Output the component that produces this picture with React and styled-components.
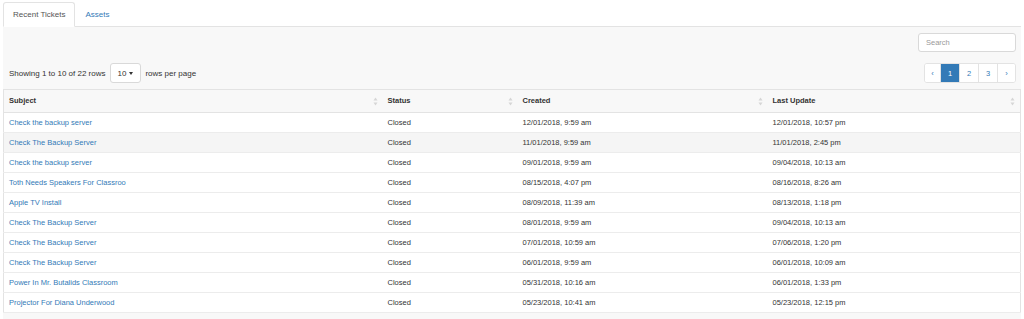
import styled, { createGlobalStyle } from 'styled-components';

const tickets = [
  { subject: 'Check the backup server', status: 'Closed', created: '12/01/2018, 9:59 am', updated: '12/01/2018, 10:57 pm' },
  { subject: 'Check The Backup Server', status: 'Closed', created: '11/01/2018, 9:59 am', updated: '11/01/2018, 2:45 pm', hover: true },
  { subject: 'Check the backup server', status: 'Closed', created: '09/01/2018, 9:59 am', updated: '09/04/2018, 10:13 am' },
  { subject: 'Toth Needs Speakers For Classroo', status: 'Closed', created: '08/15/2018, 4:07 pm', updated: '08/16/2018, 8:26 am' },
  { subject: 'Apple TV Install', status: 'Closed', created: '08/09/2018, 11:39 am', updated: '08/13/2018, 1:18 pm' },
  { subject: 'Check The Backup Server', status: 'Closed', created: '08/01/2018, 9:59 am', updated: '09/04/2018, 10:13 am' },
  { subject: 'Check The Backup Server', status: 'Closed', created: '07/01/2018, 10:59 am', updated: '07/06/2018, 1:20 pm' },
  { subject: 'Check The Backup Server', status: 'Closed', created: '06/01/2018, 9:59 am', updated: '06/01/2018, 10:09 am' },
  { subject: 'Power In Mr. Butalids Classroom', status: 'Closed', created: '05/31/2018, 10:16 am', updated: '06/01/2018, 1:33 pm' },
  { subject: 'Projector For Diana Underwood', status: 'Closed', created: '05/23/2018, 10:41 am', updated: '05/23/2018, 12:15 pm' },
];

const columns = [
  { label: 'Subject', width: 379 },
  { label: 'Status', width: 135 },
  { label: 'Created', width: 250 },
  { label: 'Last Update' },
];

function SortIcon() {
  return (
    <svg width="5" height="9" viewBox="0 0 5 9">
      <path d="M2.5 0.5 L4.5 3.5 L0.5 3.5 Z" fill="#d6d6d6" />
      <path d="M2.5 8.5 L4.5 5.5 L0.5 5.5 Z" fill="#d6d6d6" />
    </svg>
  );
}

export default function App() {
  return (
    <>
      <GlobalStyle />
      <Page>
        <Tabs>
          <Tab $active>Recent Tickets</Tab>
          <Tab>Assets</Tab>
        </Tabs>
        <Panel>
          <SearchRow>
            <SearchInput placeholder="Search" />
          </SearchRow>
          <Toolbar>
            <PageInfo>
              <span>Showing 1 to 10 of 22 rows</span>
              <SizeButton>
                10 <Caret />
              </SizeButton>
              <span>rows per page</span>
            </PageInfo>
            <Pagination>
              <PageItem>‹</PageItem>
              <PageItem $active>1</PageItem>
              <PageItem>2</PageItem>
              <PageItem>3</PageItem>
              <PageItem>›</PageItem>
            </Pagination>
          </Toolbar>
          <Table>
            <thead>
              <tr>
                {columns.map((col) => (
                  <HeadCell key={col.label} style={col.width ? { width: col.width } : undefined}>
                    <span>{col.label}</span>
                    <SortIcon />
                  </HeadCell>
                ))}
              </tr>
            </thead>
            <tbody>
              {tickets.map((t, i) => (
                <Row key={i} $hover={t.hover}>
                  <Cell>
                    <SubjectLink href="#">{t.subject}</SubjectLink>
                  </Cell>
                  <Cell>{t.status}</Cell>
                  <Cell>{t.created}</Cell>
                  <Cell>{t.updated}</Cell>
                </Row>
              ))}
            </tbody>
          </Table>
        </Panel>
      </Page>
    </>
  );
}

const GlobalStyle = createGlobalStyle`
  body {
    margin: 0;
    background: #fff;
    font-family: "Liberation Sans", Arial, Helvetica, sans-serif;
    font-size: 7.5px;
    color: #333;
  }
`;

const Page = styled.div`
  width: 1018px;
  margin-left: 3px;
  padding-top: 2px;
`;

const Tabs = styled.div`
  display: flex;
  height: 24px;
  border-bottom: 1px solid #e3e3e3;
`;

const Tab = styled.div`
  display: flex;
  align-items: center;
  padding: 0 9px 1px;
  margin-bottom: -1px;
  height: 25px;
  box-sizing: border-box;
  white-space: nowrap;
  background: ${(p) => (p.$active ? '#fff' : 'transparent')};
  border: 1px solid ${(p) => (p.$active ? '#e3e3e3' : 'transparent')};
  border-bottom-color: ${(p) => (p.$active ? '#fff' : 'transparent')};
  border-radius: 3px 3px 0 0;
  color: ${(p) => (p.$active ? '#555' : '#337ab7')};
  font-size: 8px;
`;

const Panel = styled.div`
  background: #f8f8f8;
  padding: 6px 0 6px 0;
  height: 293px;
  box-sizing: border-box;
`;

const SearchRow = styled.div`
  display: flex;
  justify-content: flex-end;
  padding-right: 5px;
`;

const SearchInput = styled.input`
  width: 98px;
  height: 19px;
  box-sizing: border-box;
  border: 1px solid #d9d9d9;
  border-radius: 3px;
  background: #fff;
  padding: 0 7px;
  font-family: inherit;
  font-size: 7.5px;
  outline: none;
  &::placeholder {
    color: #9a9a9a;
  }
`;

const Toolbar = styled.div`
  display: flex;
  justify-content: space-between;
  align-items: center;
  margin-top: 11px;
  padding: 0 5px 0 6px;
  height: 20px;
`;

const PageInfo = styled.div`
  display: flex;
  align-items: center;
  gap: 4px;
  color: #333;
  font-size: 8px;
`;

const SizeButton = styled.div`
  display: flex;
  align-items: center;
  gap: 3px;
  height: 20px;
  box-sizing: border-box;
  padding: 0 7px;
  background: #fff;
  border: 1px solid #d9d9d9;
  border-radius: 3px;
  color: #333;
`;

const Caret = styled.span`
  display: inline-block;
  border-left: 2.5px solid transparent;
  border-right: 2.5px solid transparent;
  border-top: 3px solid #333;
`;

const Pagination = styled.div`
  display: flex;
  height: 20px;
  border: 1px solid #e3e3e3;
  border-radius: 3px;
  box-sizing: border-box;
  overflow: hidden;
  background: #fff;
`;

const PageItem = styled.div`
  display: flex;
  align-items: center;
  justify-content: center;
  width: 18px;
  border-left: 1px solid #e3e3e3;
  &:first-child {
    border-left: none;
    width: 15px;
  }
  &:last-child {
    width: 17px;
  }
  background: ${(p) => (p.$active ? '#337ab7' : '#fff')};
  color: ${(p) => (p.$active ? '#fff' : '#337ab7')};
  font-size: 7.5px;
`;

const Table = styled.table`
  width: 100%;
  margin-top: 6px;
  border-collapse: collapse;
  border: 1px solid #e3e3e3;
  background: #fff;
  table-layout: fixed;
`;

const HeadCell = styled.th`
  height: 23px;
  padding: 0 5px;
  background: #f8f8f8;
  border-bottom: 1px solid #e3e3e3;
  text-align: left;
  font-weight: bold;
  font-size: 7.5px;
  color: #333;
  box-sizing: border-box;
  & > span {
    display: inline-block;
  }
  & > svg {
    float: right;
    margin-top: 1px;
  }
`;

const Row = styled.tr`
  background: ${(p) => (p.$hover ? '#f5f5f5' : '#fff')};
  border-bottom: 1px solid #ececec;
`;

const Cell = styled.td`
  height: 19px;
  padding: 0 5px;
  font-size: 7.5px;
  color: #333;
  white-space: nowrap;
  overflow: hidden;
`;

const SubjectLink = styled.a`
  color: #337ab7;
  text-decoration: none;
`;
